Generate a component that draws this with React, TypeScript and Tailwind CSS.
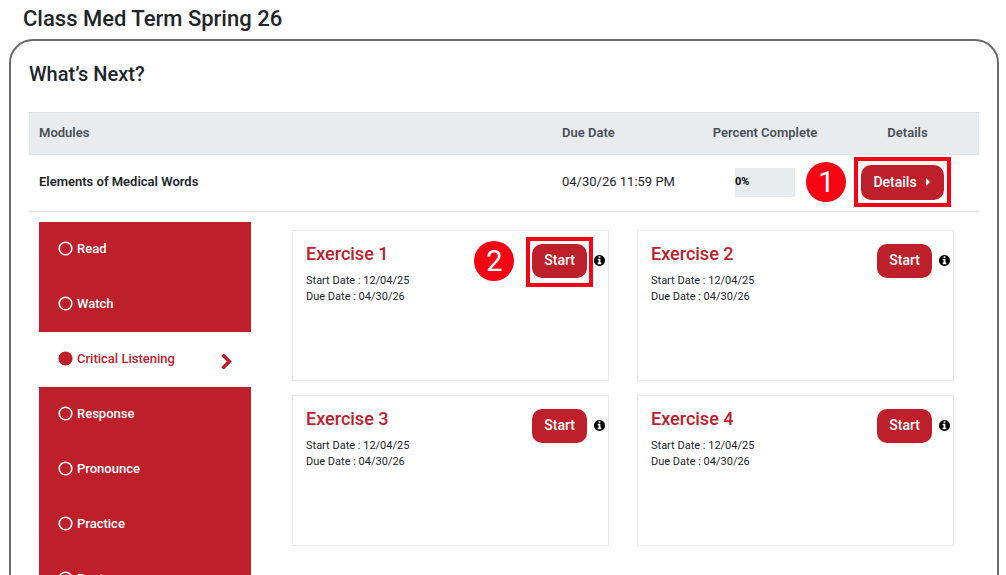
import React, { useState } from 'react';

interface Exercise {
    id: number;
    title: string;
    start: string;
    due: string;
    step?: string;
}

const steps = ['Read', 'Watch', 'Critical Listening', 'Response', 'Pronounce', 'Practice', 'Post'];

const exercises: Exercise[] = [
    { id: 1, title: 'Exercise 1', start: '12/04/25', due: '04/30/26', step: '2' },
    { id: 2, title: 'Exercise 2', start: '12/04/25', due: '04/30/26' },
    { id: 3, title: 'Exercise 3', start: '12/04/25', due: '04/30/26' },
    { id: 4, title: 'Exercise 4', start: '12/04/25', due: '04/30/26' },
];

function StepCircle({ filled }: { filled: boolean }) {
    return (
        <svg viewBox="0 0 15 15" className="size-[15px] shrink-0" aria-hidden="true">
            <circle cx="7.5" cy="7.5" r="6.3" fill={filled ? 'currentColor' : 'none'} stroke="currentColor" strokeWidth="1.6" />
        </svg>
    );
}

function Chevron() {
    return (
        <svg viewBox="90 -102 1036 1522" className="ml-auto mt-[5px] h-[15px] w-[11px]" fill="currentColor" aria-hidden="true">
            <path d="M1107 659l-742 742q-19 19-45 19t-45-19l-166-166q-19-19-19-45t19-45l531-531-531-531q-19-19-19-45t19-45l166-166q19-19 45-19t45 19l742 742q19 19 19 45t-19 45z" transform="translate(0 45)" />
        </svg>
    );
}

function InfoIcon() {
    return (
        <svg viewBox="0 0 1536 1536" className="mb-[2px] size-[11px] text-black" fill="currentColor" aria-hidden="true">
            <path d="M1024 1248v-160q0-14-9-23t-23-9h-96v-512q0-14-9-23t-23-9h-320q-14 0-23 9t-9 23v160q0 14 9 23t23 9h96v320h-96q-14 0-23 9t-9 23v160q0 14 9 23t23 9h448q14 0 23-9t9-23zm-128-896v-160q0-14-9-23t-23-9h-192q-14 0-23 9t-9 23v160q0 14 9 23t23 9h192q14 0 23-9t9-23zm640 416q0 209-103 385.5t-279.5 279.5-385.5 103-385.5-103-279.5-279.5-103-385.5 103-385.5 279.5-279.5 385.5-103 385.5 103 279.5 279.5 103 385.5z" />
        </svg>
    );
}

// Red frame around a button, with the step number to its left
function Callout({ step, frame, gap }: { step: string; frame: string; gap: string }) {
    return (
        <>
            <span className={`pointer-events-none absolute border-4 border-[#f50514] ${frame}`} />
            <span className={`pointer-events-none absolute right-full top-1/2 flex size-10 -translate-y-1/2 items-center justify-center rounded-full bg-[#f50514] pt-[2px] text-[29px] font-normal text-white ${gap}`}>
                {step}
            </span>
        </>
    );
}

function ExerciseCard({ exercise }: { exercise: Exercise }) {
    return (
        <article className="flex h-[151px] items-start justify-between border border-[#e9e9e9] py-[13px] pl-[13px] pr-[3px]">
            <div>
                <h3 className="mb-[9px] text-[18px] font-medium leading-5 text-[#bd202b]">{exercise.title}</h3>
                <p className="text-[11px] leading-4">Start Date : {exercise.start}</p>
                <p className="text-[11px] leading-4">Due Date : {exercise.due}</p>
            </div>
            <div className="flex items-center gap-[7px]">
                <div className="relative">
                    <button className="h-[34px] rounded-[10px] bg-[#bd202b] px-3 pb-px text-[14px] font-medium text-white">
                        Start
                    </button>
                    {exercise.step && <Callout step={exercise.step} frame="-inset-x-[6px] -bottom-[9px] -top-[7px]" gap="mr-[18px]" />}
                </div>
                <InfoIcon />
            </div>
        </article>
    );
}

export default function App() {
    const [active, setActive] = useState('Critical Listening');

    return (
        <main className="flex h-screen flex-col overflow-hidden bg-white pl-[9px] pr-[7px] pt-1 font-[Roboto,sans-serif] text-[#212529]">
            <h1 className="mb-[5px] shrink-0 pl-[14px] text-[22px] font-medium leading-[30px]">Class Med Term Spring 26</h1>

            <section className="shrink-0 rounded-3xl border-2 border-[#6b6b6b] px-[18px] pb-6 pt-5">
                <h2 className="mb-[25px] text-[20px] font-medium leading-[26px]">What’s Next?</h2>

                <table className="w-full table-fixed border-collapse text-left text-[13px]">
                    <thead>
                        <tr className="h-[42px] border-y border-[#dee2e6] bg-[#e9ecef] text-[#495057]">
                            <th className="px-[10px] pb-[2px] font-semibold">Modules</th>
                            <th className="w-[142px] px-[10px] pb-[2px] font-semibold">Due Date</th>
                            <th className="w-[142px] pb-[2px] text-center font-semibold">Percent Complete</th>
                            <th className="w-[143px] pb-[2px] text-center font-semibold">Details</th>
                        </tr>
                    </thead>
                    <tbody>
                        <tr className="h-[57px] border-b border-[#dee2e6]">
                            <td className="px-[10px] pb-[2px] font-semibold">Elements of Medical Words</td>
                            <td className="whitespace-nowrap px-[10px] pb-[2px]">04/30/26 11:59 PM</td>
                            <td className="pb-[2px]">
                                <div className="mx-auto flex h-[29px] w-[60px] items-center bg-[#e9ecef] pt-px text-[11px] font-bold text-black">
                                    0%
                                </div>
                            </td>
                            <td className="pb-[2px] pr-[10px] text-center">
                                <div className="relative inline-block align-middle">
                                    <button className="flex h-[35px] items-center gap-[9px] rounded-[10px] bg-[#bd202b] pl-3 pr-[14px] text-[14px] font-medium text-white">
                                        Details
                                        <svg viewBox="0 0 4 8" className="h-2 w-1" fill="currentColor" aria-hidden="true">
                                            <path d="M0 0l4 4-4 4z" />
                                        </svg>
                                    </button>
                                    <Callout step="1" frame="-inset-x-[7px] -bottom-[7px] -top-2" gap="mr-[15px]" />
                                </div>
                            </td>
                        </tr>
                    </tbody>
                </table>

                <div className="flex gap-[41px] pl-[10px] pr-[25px] pt-[10px]">
                    <nav className="w-[212px] shrink-0 bg-[#bd202b] text-[13px] font-medium">
                        {steps.map((name) => (
                            <a
                                key={name}
                                href="#"
                                onClick={() => setActive(name)}
                                className={`flex h-[55px] items-center gap-1 pb-[2px] pl-[19px] pr-[19px] ${name === active ? 'bg-white text-[#bd202b]' : 'text-white'}`}
                            >
                                <StepCircle filled={name === active} />
                                {name}
                                {name === active && <Chevron />}
                            </a>
                        ))}
                    </nav>

                    <div className="grid flex-1 grid-cols-2 content-start gap-x-7 gap-y-[14px] pt-2">
                        {exercises.map((exercise) => (
                            <ExerciseCard key={exercise.id} exercise={exercise} />
                        ))}
                    </div>
                </div>
            </section>
        </main>
    );
}
